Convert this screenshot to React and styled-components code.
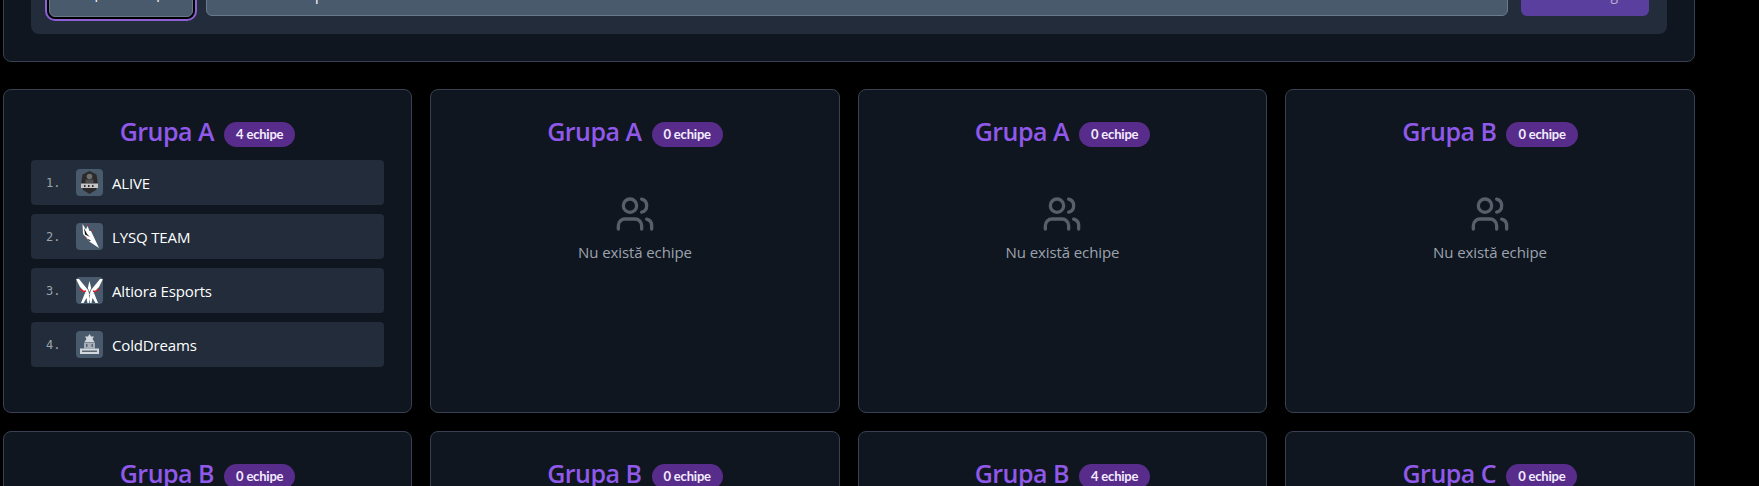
import React from "react";
import styled, { createGlobalStyle } from "styled-components";
import { Users } from "lucide-react";

const GlobalStyle = createGlobalStyle`
  html, body {
    margin: 0;
    height: 100%;
    overflow: hidden;
    background: #000;
    font-family: "Open Sans", "Noto Sans", sans-serif;
  }
`;

const Page = styled.div`
  width: 1691.5px;
  margin: -30px 0 0 3px;
  display: flex;
  flex-direction: column;
  gap: 27px;
`;

const TopPanel = styled.section`
  background: #10161f;
  border: 1px solid #374151;
  border-radius: 8px;
  padding: 0 27px 27px;
  height: 92px;
  box-sizing: border-box;
  display: flex;
  align-items: flex-end;
`;

const Toolbar = styled.div`
  flex: 1;
  height: 64px;
  box-sizing: border-box;
  background: #222c3a;
  border-radius: 8px;
  padding: 0 18px 18px;
  display: flex;
  align-items: flex-end;
  gap: 13px;
`;

const ModeButton = styled.button`
  width: 144px;
  height: 44px;
  margin-bottom: -1px;
  border: 1px solid #6b7a8b;
  border-radius: 6px;
  background: #4a5a6d;
  color: #fff;
  padding: 0 0 6px;
  font: 400 14px "Open Sans", sans-serif;
  box-shadow: 0 0 0 2px #000, 0 0 0 4px #8f5fd6;
`;

const SearchInput = styled.input`
  flex: 1;
  height: 44px;
  box-sizing: border-box;
  border: 1px solid #6b7a8b;
  border-radius: 6px;
  background: #4a5a6d;
  color: #fff;
  padding: 0 9px;
  font: 400 14px "Open Sans", sans-serif;

  &::placeholder {
    color: #fff;
    opacity: 1;
  }
`;

const AddButton = styled.button`
  width: 128px;
  height: 44px;
  border: 0;
  border-radius: 6px;
  background: #5b3f9e;
  color: #b7aed0;
  padding: 0;
  font: 500 14px "Open Sans", sans-serif;
`;

const Grid = styled.div`
  display: grid;
  grid-template-columns: repeat(4, 1fr);
  gap: 18.4px;
`;

const Card = styled.article`
  height: 324px;
  box-sizing: border-box;
  background: #0f161f;
  border: 1px solid #374151;
  border-radius: 8px;
  padding: 27px 27px 0;
`;

const CardHeader = styled.header`
  display: flex;
  justify-content: center;
  align-items: center;
  gap: 10px;
  height: 28px;
  margin-bottom: 15px;
`;

const GroupTitle = styled.h3`
  margin: 0;
  color: #9059ea;
  font: 600 25px/28px "Open Sans", sans-serif;
  letter-spacing: -0.5px;
`;

const CountBadge = styled.span`
  display: inline-flex;
  align-items: center;
  justify-content: center;
  height: 25px;
  margin-top: 6px;
  padding: 0 12px;
  border-radius: 999px;
  background: #582c8b;
  color: #f3ecff;
  font: 700 13px "Lato", sans-serif;
  letter-spacing: -0.2px;
`;

const TeamList = styled.ol`
  list-style: none;
  margin: 0;
  padding: 0;
  display: flex;
  flex-direction: column;
  gap: 9px;
`;

const TeamRow = styled.li`
  height: 45px;
  box-sizing: border-box;
  background: #222c3a;
  border-radius: 4px;
  padding: 0 15px;
  display: flex;
  align-items: center;
`;

const Rank = styled.span`
  width: 30px;
  color: #9ca3af;
  font: 400 12px "DejaVu Sans Mono", monospace;
`;

const LogoBox = styled.span`
  width: 27px;
  height: 27px;
  flex: none;
  margin-right: 9px;
  border-radius: 4px;
  background: #4a5a6d;
  display: flex;
  align-items: center;
  justify-content: center;
  overflow: hidden;
`;

const TeamName = styled.span`
  color: #fff;
  font: 400 15px "Open Sans", sans-serif;
  letter-spacing: -0.15px;
`;

const EmptyState = styled.div`
  display: flex;
  flex-direction: column;
  align-items: center;
  padding-top: 34px;
  color: #9ca3af;
  font: 400 15px/20px "Open Sans", sans-serif;
  letter-spacing: -0.1px;

  svg {
    color: #585f6a;
    margin-bottom: 8px;
  }
`;

const AliveLogo = () => (
  <svg width="27" height="27" viewBox="0 0 27 27">
    <path d="M13.5 2l7 3.5 1.5 9.5-2 6-6.500 4-6.500-4-2-6 1.500-9.500z" fill="#2b2b2b" />
    <circle cx="13.500" cy="7.500" r="2.800" fill="#6f6f6f" />
    <path d="M9.500 10.500h8v3.500h-8z" fill="#4e4e4e" />
    <rect x="5" y="14.500" width="17" height="4.500" fill="#c4c4c4" />
    <path d="M8 16h1.500v2H8zM12 16h1.500v2H12zM16 16h1.500v2H16z" fill="#2b2b2b" />
  </svg>
);

const LysqLogo = () => (
  <svg width="27" height="27" viewBox="0 0 27 27">
    <path d="M6.500 1l3.500 5.500L11.500 3l2 5 1.500 0 8 17-9-6-7-8z" fill="#fff" />
    <path d="M8 5l3 6 3 3-5-2.500zM11 15.500l4 2-1.500.5z" fill="#111" />
    <path d="M12 1l.8 1.500M16.500 7l.8 1.500M9 14l1.500.7" stroke="#c2222d" strokeWidth="1" />
  </svg>
);

const AltioraLogo = () => (
  <svg width="27" height="27" viewBox="0 0 27 27">
    <path d="M0 2h3l9 11 1.500 5-3-1L4 10z" fill="#fff" />
    <path d="M27 2h-3l-9 11-1.500 5 3-1 6.500-7z" fill="#fff" />
    <path d="M13.500 4l1.700 7-1.700 4-1.700-4z" fill="#fff" />
    <path d="M9 16l-4 10h2.500l3-5 1 5h1.500l1-8zM18 16l4 10h-2.500l-3-5-1 5H14l-1-8z" fill="#fff" />
    <path d="M3.500 12l4.500 2.500 2-.5M23.500 12l-4.500 2.500-2-.5" stroke="#e01b24" strokeWidth="1.300" fill="none" />
  </svg>
);

const ColdDreamsLogo = () => (
  <svg width="27" height="27" viewBox="0 0 27 27">
    <path d="M13.500 3l1.500 2.500h3L16.500 8l2 3h-10l2-3L9 5.500h3z" fill="#d3d8de" />
    <path d="M8 11.500h11v6H8z" fill="#a6afba" />
    <path d="M10 13h1.500v3H10zM15.500 13H17v3h-1.500z" fill="#5c6773" />
    <rect x="4" y="17.500" width="19" height="5.500" fill="#d3d8de" />
    <path d="M6 19.500h15V21H6z" fill="#5c6773" />
  </svg>
);

const teams = [
  { name: "ALIVE", Logo: AliveLogo },
  { name: "LYSQ TEAM", Logo: LysqLogo },
  { name: "Altiora Esports", Logo: AltioraLogo },
  { name: "ColdDreams", Logo: ColdDreamsLogo },
];

const groups = [
  { name: "Grupa A", teams },
  { name: "Grupa A", teams: [] },
  { name: "Grupa A", teams: [] },
  { name: "Grupa B", teams: [] },
  { name: "Grupa B", teams: [] },
  { name: "Grupa B", teams: [] },
  { name: "Grupa B", count: 4, teams: [] },
  { name: "Grupa C", teams: [] },
];

const GroupCard = ({ group }) => (
  <Card>
    <CardHeader>
      <GroupTitle>{group.name}</GroupTitle>
      <CountBadge>{group.count ?? group.teams.length} echipe</CountBadge>
    </CardHeader>
    {group.teams.length > 0 ? (
      <TeamList>
        {group.teams.map(({ name, Logo }, index) => (
          <TeamRow key={name}>
            <Rank>{index + 1}.</Rank>
            <LogoBox>
              <Logo />
            </LogoBox>
            <TeamName>{name}</TeamName>
          </TeamRow>
        ))}
      </TeamList>
    ) : (
      <EmptyState>
        <Users size={40} strokeWidth={2} />
        Nu există echipe
      </EmptyState>
    )}
  </Card>
);

const App = () => (
  <>
    <GlobalStyle />
    <Page>
      <TopPanel>
        <Toolbar>
          <ModeButton>Copiere Grup</ModeButton>
          <SearchInput placeholder="Selectează echipă" readOnly />
          <AddButton>Salvează Tragere</AddButton>
        </Toolbar>
      </TopPanel>
      <Grid>
        {groups.map((group, index) => (
          <GroupCard key={index} group={group} />
        ))}
      </Grid>
    </Page>
  </>
);

export default App;
